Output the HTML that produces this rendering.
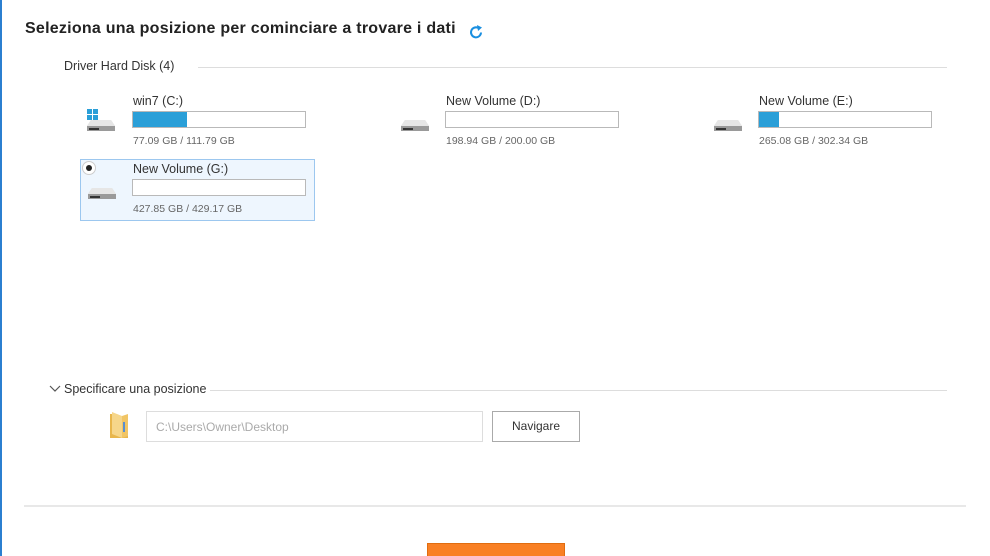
<!DOCTYPE html>
<html><head><meta charset="utf-8"><style>
*{margin:0;padding:0;box-sizing:border-box}
html,body{width:990px;height:556px;overflow:hidden}
body{background:#fff;font-family:"Liberation Sans",Arial,sans-serif;position:relative;color:#333}
.a{position:absolute}
.t{font-size:12.5px;color:#333}
.s{font-size:10.5px;color:#666}
.bar{position:absolute;width:174px;height:17px;border:1px solid #b9b9b9;background:#fff}
.bar i{position:absolute;left:0;top:0;bottom:0;background:#2a9fd8}
.line{position:absolute;height:1px;background:#ddd}
</style></head><body>
<div class="a" style="left:0;top:0;width:2px;height:556px;background:#2b7fd0"></div>
<div class="a" style="left:25px;top:20px;font-size:16px;font-weight:bold;color:#222;letter-spacing:0.25px">Seleziona una posizione per cominciare a trovare i dati</div>
<svg class="a" style="left:468px;top:24px" width="16" height="16" viewBox="0 0 16 16"><path d="M13 8.5A5 5 0 1 1 10.5 4" fill="none" stroke="#1a8fe0" stroke-width="2"/><path d="M9 1l5 2.5-4 3.5z" fill="#1a8fe0"/></svg>
<div class="a t" style="left:64px;top:59px">Driver Hard Disk (4)</div>
<div class="line" style="left:198px;top:67px;width:749px"></div>

<svg width="0" height="0" style="position:absolute"><defs><g id="d"><path d="M4 4h20l4 6v5H0v-5z" fill="#d8d8d8"/><path d="M0 10h28v5H0z" fill="#9a9a9a"/><path d="M4 4h20l4 6H0z" fill="#e6e6e6"/><rect x="2" y="12" width="10" height="2" fill="#333"/></g></defs></svg>

<svg class="a" style="left:86px;top:108px" width="30" height="24"><g transform="translate(1,8)"><use href="#d"/></g><rect x="1" y="1" width="5" height="5" fill="#2a9fd8"/><rect x="7" y="1" width="5" height="5" fill="#2a9fd8"/><rect x="1" y="7" width="5" height="5" fill="#2a9fd8"/><rect x="7" y="7" width="5" height="5" fill="#2a9fd8"/></svg>
<div class="a t" style="left:133px;top:94px">win7 (C:)</div>
<div class="bar" style="left:132px;top:111px"><i style="width:54px"></i></div>
<div class="a s" style="left:133px;top:135px">77.09 GB / 111.79 GB</div>

<svg class="a" style="left:401px;top:116px" width="30" height="16"><use href="#d"/></svg>
<div class="a t" style="left:446px;top:94px">New Volume (D:)</div>
<div class="bar" style="left:445px;top:111px"></div>
<div class="a s" style="left:446px;top:135px">198.94 GB / 200.00 GB</div>

<svg class="a" style="left:714px;top:116px" width="30" height="16"><use href="#d"/></svg>
<div class="a t" style="left:759px;top:94px">New Volume (E:)</div>
<div class="bar" style="left:758px;top:111px"><i style="width:20px"></i></div>
<div class="a s" style="left:759px;top:135px">265.08 GB / 302.34 GB</div>

<div class="a" style="left:80px;top:159px;width:235px;height:62px;background:#eef6fe;border:1px solid #9cc7ef"></div>
<div class="a" style="left:82px;top:161px;width:14px;height:14px;border-radius:50%;background:#fff;border:1px solid #ccc"></div>
<div class="a" style="left:86px;top:165px;width:6px;height:6px;border-radius:50%;background:#222"></div>
<svg class="a" style="left:88px;top:184px" width="30" height="16"><use href="#d"/></svg>
<div class="a t" style="left:133px;top:162px">New Volume (G:)</div>
<div class="bar" style="left:132px;top:179px"></div>
<div class="a s" style="left:133px;top:203px">427.85 GB / 429.17 GB</div>

<svg class="a" style="left:49px;top:384px" width="12" height="10"><path d="M1 2l5 5 5-5" fill="none" stroke="#555" stroke-width="1.2"/></svg>
<div class="a t" style="left:64px;top:382px">Specificare una posizione</div>
<div class="line" style="left:210px;top:390px;width:737px"></div>
<svg class="a" style="left:108px;top:410px" width="24" height="30"><path d="M2 4h7l2 3h9v21H2z" fill="#e8b64c"/><path d="M4 2l10 4v22L4 24z" fill="#f6d68a"/><path d="M14 6l6 -2v22l-6 2z" fill="#f1c565"/><rect x="15" y="12" width="2" height="10" fill="#5a8fd0"/></svg>
<div class="a" style="left:146px;top:411px;width:337px;height:31px;border:1px solid #ddd;background:#fff;font-size:12px;color:#aaa;padding:8px 0 0 9px">C:\Users\Owner\Desktop</div>
<div class="a" style="left:492px;top:411px;width:88px;height:31px;border:1px solid #aaa;background:#fff;font-size:12px;color:#333;text-align:center;line-height:29px">Navigare</div>
<div class="a" style="left:24px;top:505px;width:942px;height:2px;background:#e8e8e8"></div>
<div class="a" style="left:427px;top:543px;width:138px;height:30px;background:#f98024;border:1px solid #e06d10"></div>
</body></html>
